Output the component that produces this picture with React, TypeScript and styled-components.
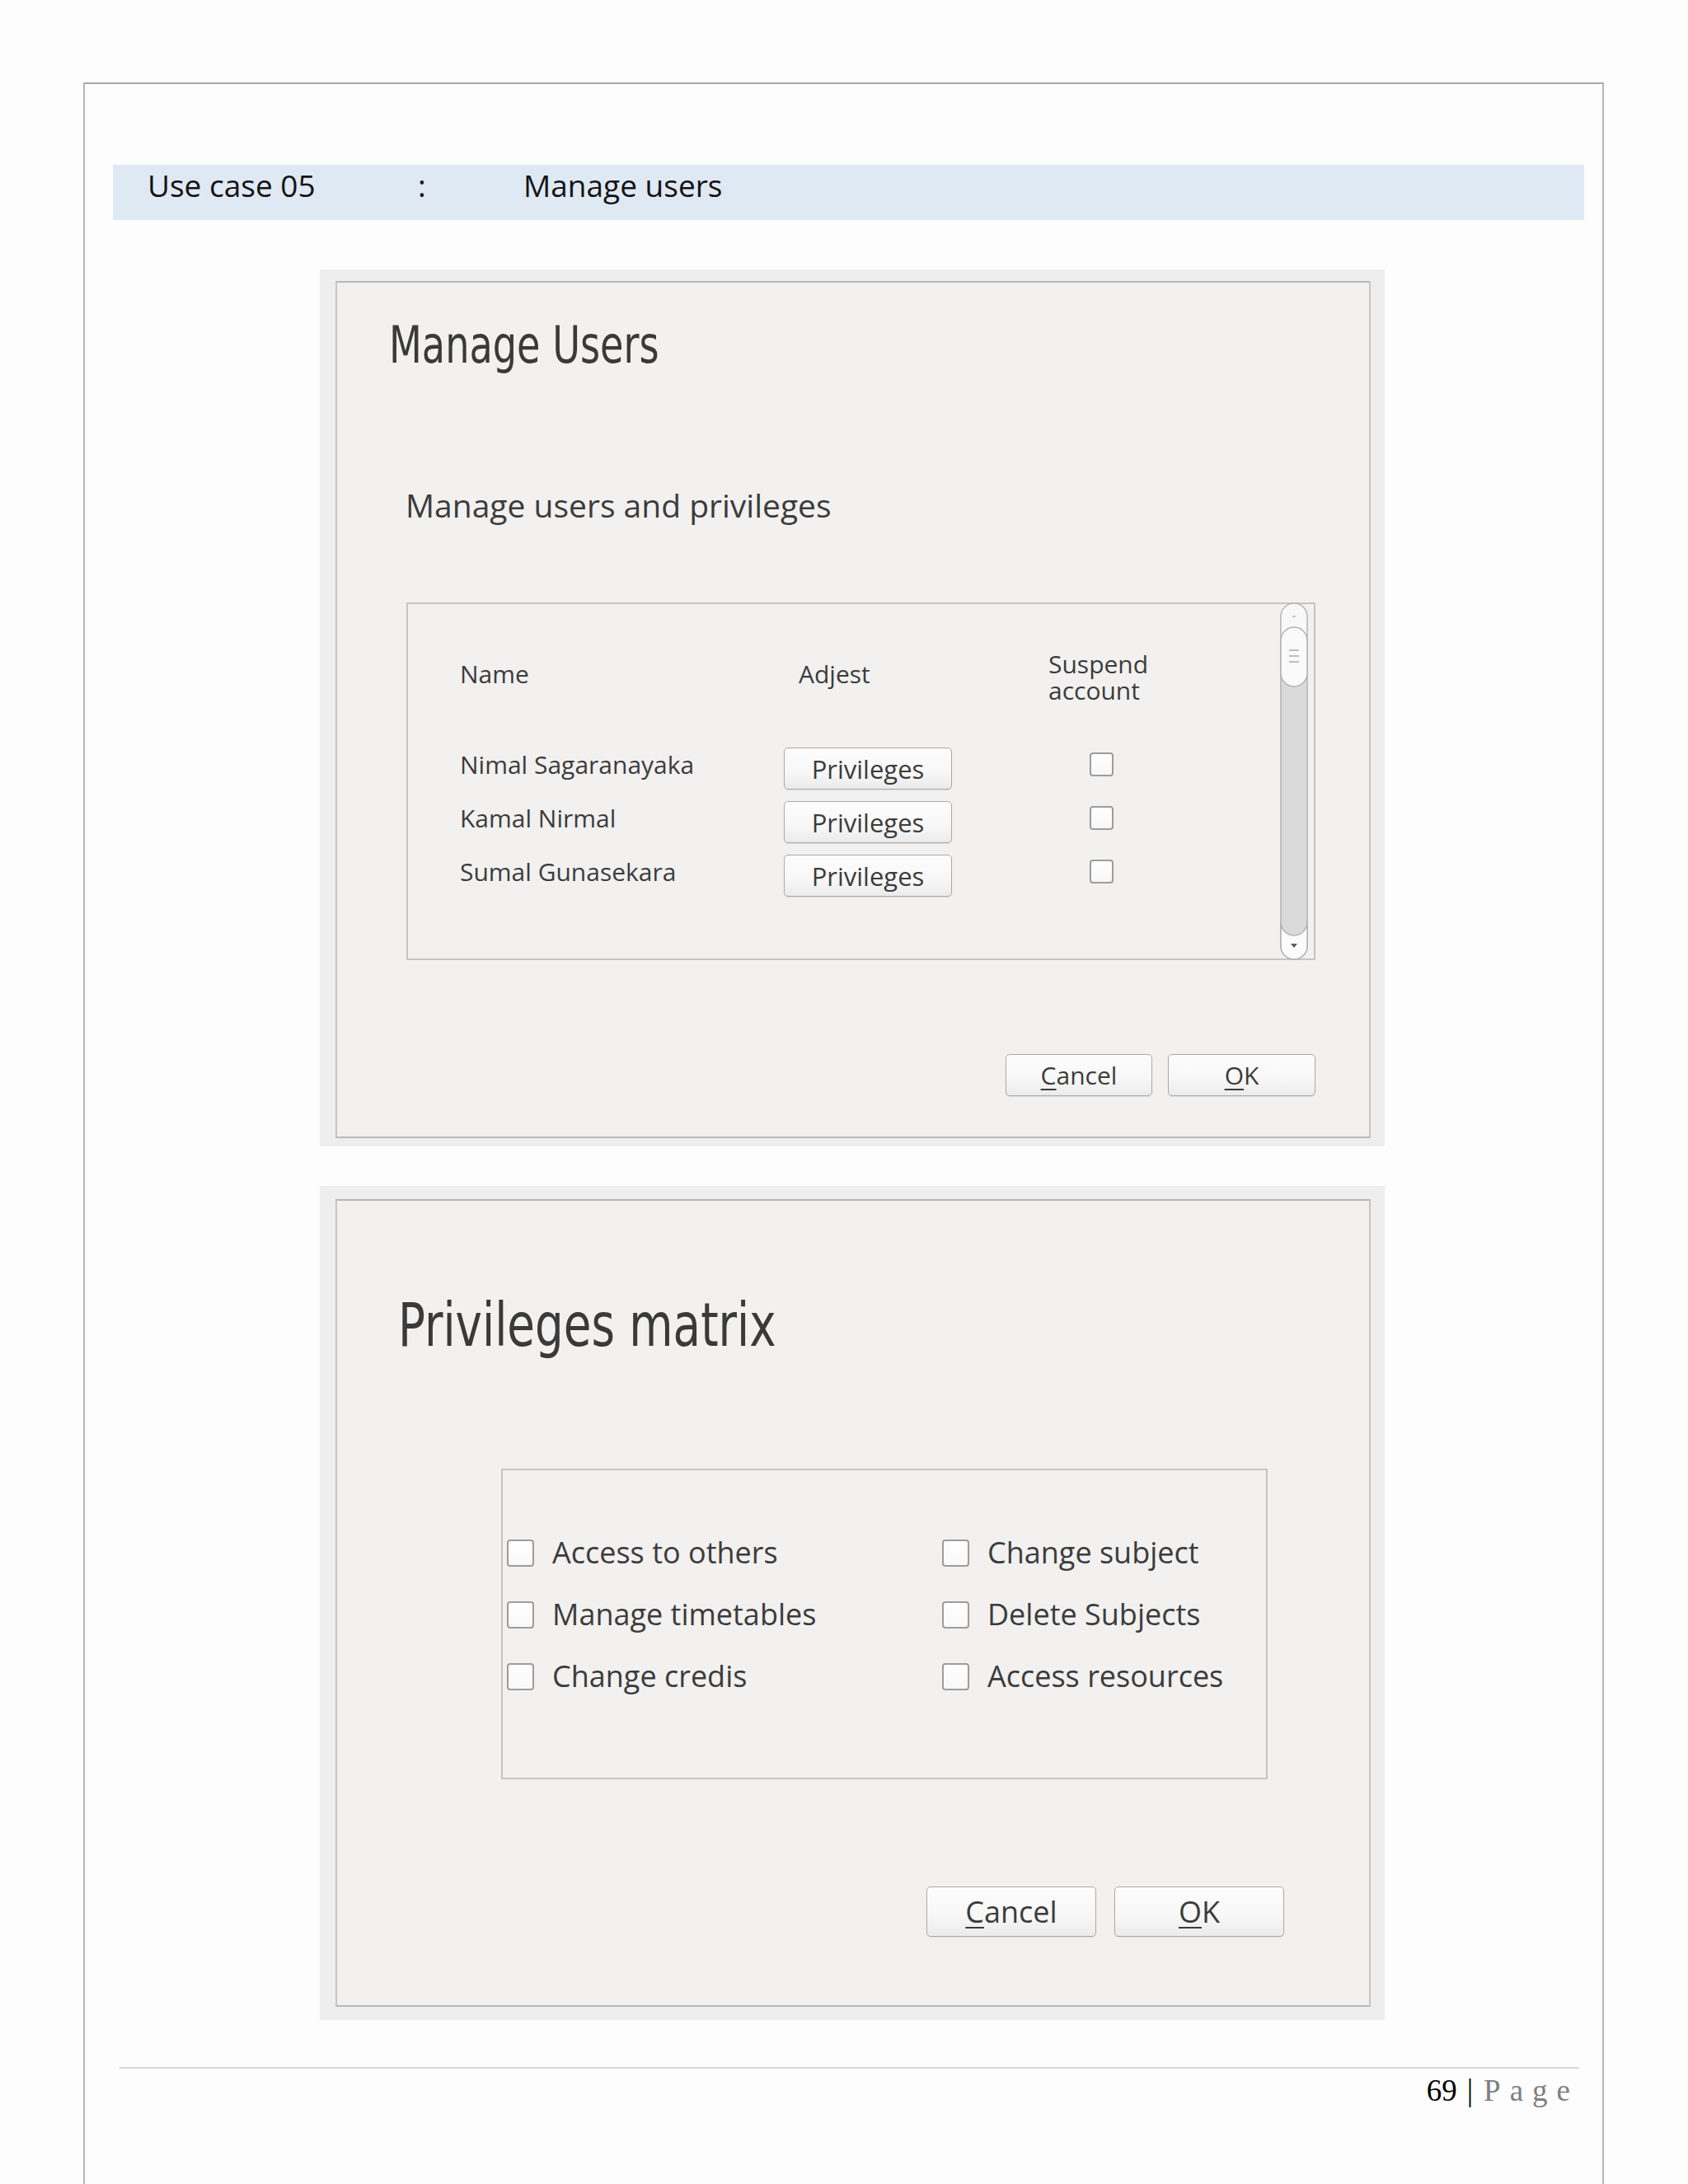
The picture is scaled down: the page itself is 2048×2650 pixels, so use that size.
import React from 'react';
import styled, { createGlobalStyle } from 'styled-components';

const GlobalStyle = createGlobalStyle`
  html, body {
    margin: 0;
    padding: 0;
    background: #fdfdfd;
  }
  body {
    width: 2048px;
    height: 2650px;
    overflow: hidden;
    font-family: "Open Sans", "Noto Sans", sans-serif;
  }
`;

const Page = styled.div`
  box-sizing: border-box;
  margin: 100px 0 0 101px;
  width: 1845px;
  height: 2550px;
  border: 2px solid #a9a9a9;
  border-left-color: #b6b6b6;
  border-right-color: #b6b6b6;
  border-bottom: none;
  display: flex;
  flex-direction: column;
`;

const UseCaseBar = styled.div`
  box-sizing: border-box;
  margin: 98px 22px 0 34px;
  height: 67px;
  padding: 0 0 18px 42px;
  background: #dfe9f4;
  display: flex;
  align-items: center;
  font-family: "Open Sans", sans-serif;
  font-size: 37px;
  color: #141414;
`;

const BarCell = styled.span<{ $w?: number }>`
  flex: none;
  width: ${(p) => (p.$w ? `${p.$w}px` : 'auto')};
`;

const Shot = styled.div<{ $mt: number; $pt: number; $pb: number }>`
  box-sizing: border-box;
  margin: ${(p) => p.$mt}px 0 0 285px;
  width: 1292px;
  padding: ${(p) => p.$pt}px 17px ${(p) => p.$pb}px 19px;
  background: #efeeee;
`;

const Window = styled.div<{ $pt: number; $pr: number; $pb: number }>`
  border: 2px solid #b9b8b8;
  border-left-color: #c6c5c5;
  border-right-color: #c6c5c5;
  background: #f2f1f0;
  padding: ${(p) => p.$pt}px ${(p) => p.$pr}px ${(p) => p.$pb}px 60px;
  display: flex;
  flex-direction: column;
  align-items: flex-start;
  color: #3c3c3c;
`;

/* the dialogs use a condensed face; squeeze the available sans to its width */
const Title = styled.h1<{ $size: number; $lh: number; $ml: number; $squeeze: number }>`
  margin: 0 0 0 ${(p) => p.$ml}px;
  font-family: "DejaVu Sans Condensed", "DejaVu Sans", sans-serif;
  font-weight: 400;
  font-size: ${(p) => p.$size}px;
  line-height: ${(p) => p.$lh}px;
  color: #3a3a3a;
  white-space: nowrap;
  transform: scaleX(${(p) => p.$squeeze});
  transform-origin: left center;
`;

const Subtitle = styled.div`
  margin: 136px 0 0 23px;
  font-size: 39px;
  line-height: 46px;
`;

const UsersFrame = styled.div`
  box-sizing: border-box;
  margin: 95px 0 0 24px;
  width: 1103px;
  height: 434px;
  border: 2px solid #c6c5c5;
  display: flex;
`;

const TableArea = styled.div`
  flex: 1;
  padding: 57px 0 0 63px;
  display: flex;
  flex-direction: column;
  font-size: 30px;
  line-height: 32px;
`;

const TableGrid = styled.div<{ $h?: number }>`
  display: grid;
  grid-template-columns: 393px 321px 1fr;
  align-items: center;
  height: ${(p) => (p.$h ? `${p.$h}px` : 'auto')};
`;

const HeaderRow = styled(TableGrid)`
  margin-bottom: 53px;
`;

const RowList = styled.div`
  display: flex;
  flex-direction: column;
  gap: 14px;
`;

const NameCell = styled.div<{ $lift: number }>`
  padding-bottom: ${(p) => p.$lift}px;
  white-space: nowrap;
`;

const AdjustHead = styled.div`
  padding: 0 0 9px 18px;
`;

const HeadLine = styled.div`
  line-height: 32px;
`;

const Scrollbar = styled.svg`
  flex: none;
  width: 34px;
  height: 434px;
  margin: -2px 7px -2px 0;
`;

const Check = styled.span<{ $size: number; $lift?: number }>`
  box-sizing: border-box;
  display: block;
  flex: none;
  width: ${(p) => p.$size}px;
  height: ${(p) => p.$size}px;
  margin-bottom: ${(p) => p.$lift ?? 0}px;
  border: 2px solid #9d9d9d;
  border-radius: 4px;
  background: linear-gradient(#ffffff, #f8f8f8);
`;

const SuspendCheck = styled(Check)`
  margin-left: 50px;
`;

const PushButton = styled.div<{ $w: number; $h: number; $fs: number }>`
  box-sizing: border-box;
  flex: none;
  width: ${(p) => p.$w}px;
  height: ${(p) => p.$h}px;
  border: 1.5px solid #aaaaaa;
  border-radius: 5px;
  background: linear-gradient(#fdfdfd 0%, #f7f7f7 60%, #ebebeb 100%);
  box-shadow: 0 1px 1px rgba(0, 0, 0, 0.08);
  display: flex;
  align-items: center;
  justify-content: center;
  font-size: ${(p) => p.$fs}px;
  color: #3c3c3c;
`;

const Mnemonic = styled.span`
  text-decoration: underline;
  text-decoration-thickness: 2px;
  text-underline-offset: 5px;
`;

const ButtonRow = styled.div<{ $mt: number; $gap: number }>`
  margin-top: ${(p) => p.$mt}px;
  align-self: stretch;
  display: flex;
  justify-content: flex-end;
  gap: ${(p) => p.$gap}px;
`;

const MatrixBox = styled.div`
  box-sizing: border-box;
  margin: 134px 0 0 139px;
  width: 930px;
  height: 377px;
  border: 2px solid #c6c5c5;
  padding: 78px 0 0 5px;
  display: grid;
  grid-template-columns: 528px 1fr;
  grid-auto-rows: 44px;
  row-gap: 31px;
  align-content: start;
`;

const Option = styled.label`
  display: flex;
  align-items: center;
  gap: 22px;
  font-size: 36px;
  line-height: 44px;
  white-space: nowrap;
`;

const Footer = styled.div`
  margin: 57px 28px 0 42px;
  border-top: 2px solid #dadada;
  padding-top: 5px;
  text-align: right;
  font-family: "Liberation Serif", "Times New Roman", serif;
  font-size: 37px;
  line-height: 43px;
  color: #000;
`;

const PageBar = styled.span`
  margin: 0 13px 0 12px;
`;

const PageWord = styled.span`
  color: #7f7f7f;
  letter-spacing: 11px;
`;

const users = ['Nimal Sagaranayaka', 'Kamal Nirmal', 'Sumal Gunasekara'];

const privileges = [
  'Access to others',
  'Change subject',
  'Manage timetables',
  'Delete Subjects',
  'Change credis',
  'Access resources',
];

const ScrollbarDrawing = () => (
  <Scrollbar viewBox="0 0 34 434">
    <rect x="1" y="1" width="32" height="432" rx="16" fill="#dadada" stroke="#b3b3b3" strokeWidth="1.5" />
    <path d="M1.8 40 V17 A15.2 15.2 0 0 1 32.2 17 V40 Z" fill="#f8f8f8" />
    <polygon points="14.5,18 19.5,18 17,15" fill="#bdbdbd" />
    <rect x="1" y="30" width="32" height="72" rx="16" fill="#fafafa" stroke="#b3b3b3" strokeWidth="1.5" />
    <line x1="11" y1="58" x2="23" y2="58" stroke="#a8a8a8" strokeWidth="1.5" />
    <line x1="11" y1="65" x2="23" y2="65" stroke="#a8a8a8" strokeWidth="1.5" />
    <line x1="11" y1="72" x2="23" y2="72" stroke="#a8a8a8" strokeWidth="1.5" />
    <path d="M1 388 A16 16 0 0 0 33 388 V417 A16 16 0 0 1 1 417 Z" fill="#fbfbfb" stroke="#b3b3b3" strokeWidth="1.5" />
    <polygon points="13,414 21,414 17,419" fill="#5a5a5a" />
  </Scrollbar>
);

const App = () => {
  return (
    <>
      <GlobalStyle />
      <Page>
        <UseCaseBar>
          <BarCell $w={328}>Use case 05</BarCell>
          <BarCell $w={128}>:</BarCell>
          <BarCell>Manage users</BarCell>
        </UseCaseBar>

        <Shot $mt={60} $pt={14} $pb={10}>
          <Window $pt={41} $pr={65} $pb={49}>
            <Title $size={63} $lh={70} $ml={3} $squeeze={0.815}>
              Manage Users
            </Title>
            <Subtitle>Manage users and privileges</Subtitle>
            <UsersFrame>
              <TableArea>
                <HeaderRow>
                  <NameCell $lift={9}>Name</NameCell>
                  <AdjustHead>Adjest</AdjustHead>
                  <div>
                    <HeadLine>Suspend</HeadLine>
                    <HeadLine>account</HeadLine>
                  </div>
                </HeaderRow>
                <RowList>
                  {users.map((u) => (
                    <TableGrid key={u} $h={51}>
                      <NameCell $lift={10}>{u}</NameCell>
                      <PushButton $w={204} $h={51} $fs={31}>
                        Privileges
                      </PushButton>
                      <SuspendCheck $size={29} $lift={10} />
                    </TableGrid>
                  ))}
                </RowList>
              </TableArea>
              <ScrollbarDrawing />
            </UsersFrame>
            <ButtonRow $mt={114} $gap={19}>
              <PushButton $w={178} $h={51} $fs={30}>
                <span>
                  <Mnemonic>C</Mnemonic>ancel
                </span>
              </PushButton>
              <PushButton $w={179} $h={51} $fs={30}>
                <span>
                  <Mnemonic>O</Mnemonic>K
                </span>
              </PushButton>
            </ButtonRow>
          </Window>
        </Shot>

        <Shot $mt={48} $pt={16} $pb={16}>
          <Window $pt={111} $pr={103} $pb={83}>
            <Title $size={73} $lh={80} $ml={14} $squeeze={0.833}>
              Privileges matrix
            </Title>
            <MatrixBox>
              {privileges.map((p) => (
                <Option key={p}>
                  <Check $size={33} />
                  <span>{p}</span>
                </Option>
              ))}
            </MatrixBox>
            <ButtonRow $mt={130} $gap={22}>
              <PushButton $w={206} $h={61} $fs={36}>
                <span>
                  <Mnemonic>C</Mnemonic>ancel
                </span>
              </PushButton>
              <PushButton $w={206} $h={61} $fs={36}>
                <span>
                  <Mnemonic>O</Mnemonic>K
                </span>
              </PushButton>
            </ButtonRow>
          </Window>
        </Shot>

        <Footer>
          69<PageBar>|</PageBar>
          <PageWord>Page</PageWord>
        </Footer>
      </Page>
    </>
  );
};

export default App;
